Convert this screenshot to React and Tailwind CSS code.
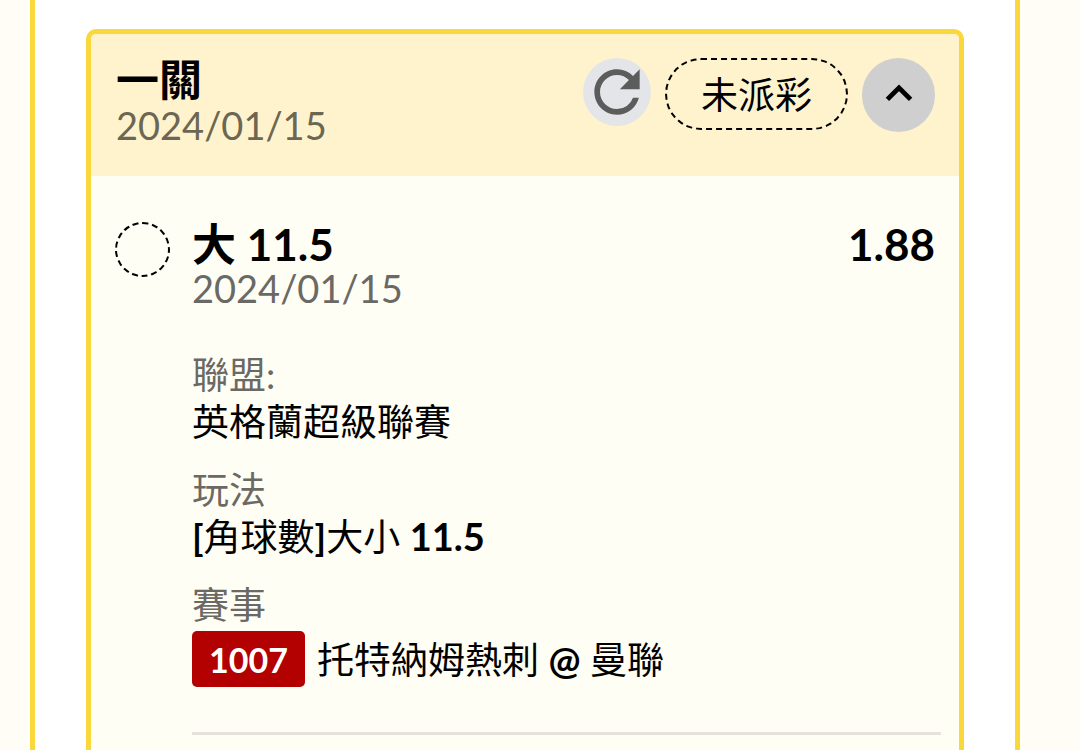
import React, { useState } from 'react';

const ticket = {
  title: '一關',
  date: '2024/01/15',
  status: '未派彩',
};

const selection = {
  pick: '大 11.5',
  odds: '1.88',
  date: '2024/01/15',
  league: '英格蘭超級聯賽',
  marketType: '角球數',
  market: '大小',
  line: '11.5',
  matchNo: '1007',
  home: '曼聯',
  away: '托特納姆熱刺',
};

const RefreshIcon = () => (
  <svg viewBox="0 0 24 24" className="w-full h-full" fill="currentColor" aria-hidden="true">
    <path d="M17.65 6.35A7.958 7.958 0 0 0 12 4c-4.42 0-7.99 3.58-7.99 8s3.57 8 7.99 8c3.73 0 6.84-2.55 7.73-6h-2.08A5.99 5.99 0 0 1 12 18c-3.31 0-6-2.69-6-6s2.69-6 6-6c1.66 0 3.14.69 4.22 1.78L13 11h7V4l-2.35 2.35z" />
  </svg>
);

const ChevronIcon = ({ isOpen }) => (
  <svg
    viewBox="0 0 28 18"
    className={`w-7 ${isOpen ? '' : 'rotate-180'}`}
    fill="none"
    stroke="currentColor"
    strokeWidth="4.8"
    aria-hidden="true"
  >
    <path d="M2.4 15.4 14 3.8l11.6 11.6" />
  </svg>
);

const Field = ({ label, children }) => (
  <div>
    <dt className="text-[#6b6964]">{label}</dt>
    <dd>{children}</dd>
  </div>
);

const TicketHeader = ({ isOpen, onToggle }) => (
  <header className="flex items-start justify-between bg-[#fff3cd] pl-[25px] pr-6 pt-[23px] pb-[29px]">
    <div>
      <h2 className="text-[43px] leading-[46px] font-bold">{ticket.title}</h2>
      <p className="text-[38px] leading-[44px] text-[#6b6752]">{ticket.date}</p>
    </div>

    <div className="flex items-start gap-[14px] pt-px">
      <button type="button" aria-label="Refresh" className="w-[68px] h-[68px] rounded-full bg-[#e4e5e8] text-[#5c5c5c]">
        <RefreshIcon />
      </button>
      <span className="h-[72px] px-[34px] flex items-center rounded-full border-2 border-dashed border-black">
        {ticket.status}
      </span>
      <button
        type="button"
        aria-label="Toggle details"
        aria-expanded={isOpen}
        onClick={onToggle}
        className="w-[73px] h-[74px] pb-1 flex items-center justify-center rounded-full bg-[#cfcfcf]"
      >
        <ChevronIcon isOpen={isOpen} />
      </button>
    </div>
  </header>
);

const Selection = () => (
  <section className="flex gap-[22px] pl-6 pr-[18px] pt-[46px]">
    {/* Pending result marker */}
    <span className="w-[55px] h-[55px] shrink-0 rounded-full border-2 border-dashed border-black" />

    <div className="flex-1 min-w-0 pb-[45px] border-b-3 border-[#e5e2dc]">
      <div className="pb-[41px]">
        <div className="flex justify-between pr-[6px] text-[44px] leading-[44px] font-bold">
          <h3>{selection.pick}</h3>
          <span>{selection.odds}</span>
        </div>
        <p className="text-[38px] leading-[44px] text-[#6b6964]">{selection.date}</p>
      </div>

      <dl className="flex flex-col gap-[21px]">
        <Field label="聯盟:">{selection.league}</Field>
        <Field label="玩法">
          <b>[</b>{selection.marketType}<b>]</b>{selection.market}{' '}
          <b className="text-[38px]">{selection.line}</b>
        </Field>
        <Field label="賽事">
          <span className="flex items-center gap-3 pt-[3px]">
            <span className="h-14 px-[17px] flex items-center rounded-[5px] bg-[#b30000] text-[34px] font-bold text-white">
              {selection.matchNo}
            </span>
            <span>
              {selection.away} <b className="text-[38px]">@</b> {selection.home}
            </span>
          </span>
        </Field>
      </dl>
    </div>
  </section>
);

const App = () => {
  const [isOpen, setIsOpen] = useState(true);

  return (
    <div
      lang="zh-Hant"
      className="min-h-screen flex bg-[#fffdf5] pl-[30px] pr-[60px] font-[Lato,'Noto_Sans_CJK_TC',sans-serif] text-[37px] leading-[47px] text-black"
    >
      <main className="flex-1 flex bg-white border-x-5 border-[#fad73b] px-[51px] pt-[29px]">
        <article className="flex-1 rounded-t-[10px] border-5 border-b-0 border-[#fad73b] bg-[#fffef5] overflow-hidden">
          <TicketHeader isOpen={isOpen} onToggle={() => setIsOpen(!isOpen)} />
          {isOpen && <Selection />}
        </article>
      </main>
    </div>
  );
};

export default App;
